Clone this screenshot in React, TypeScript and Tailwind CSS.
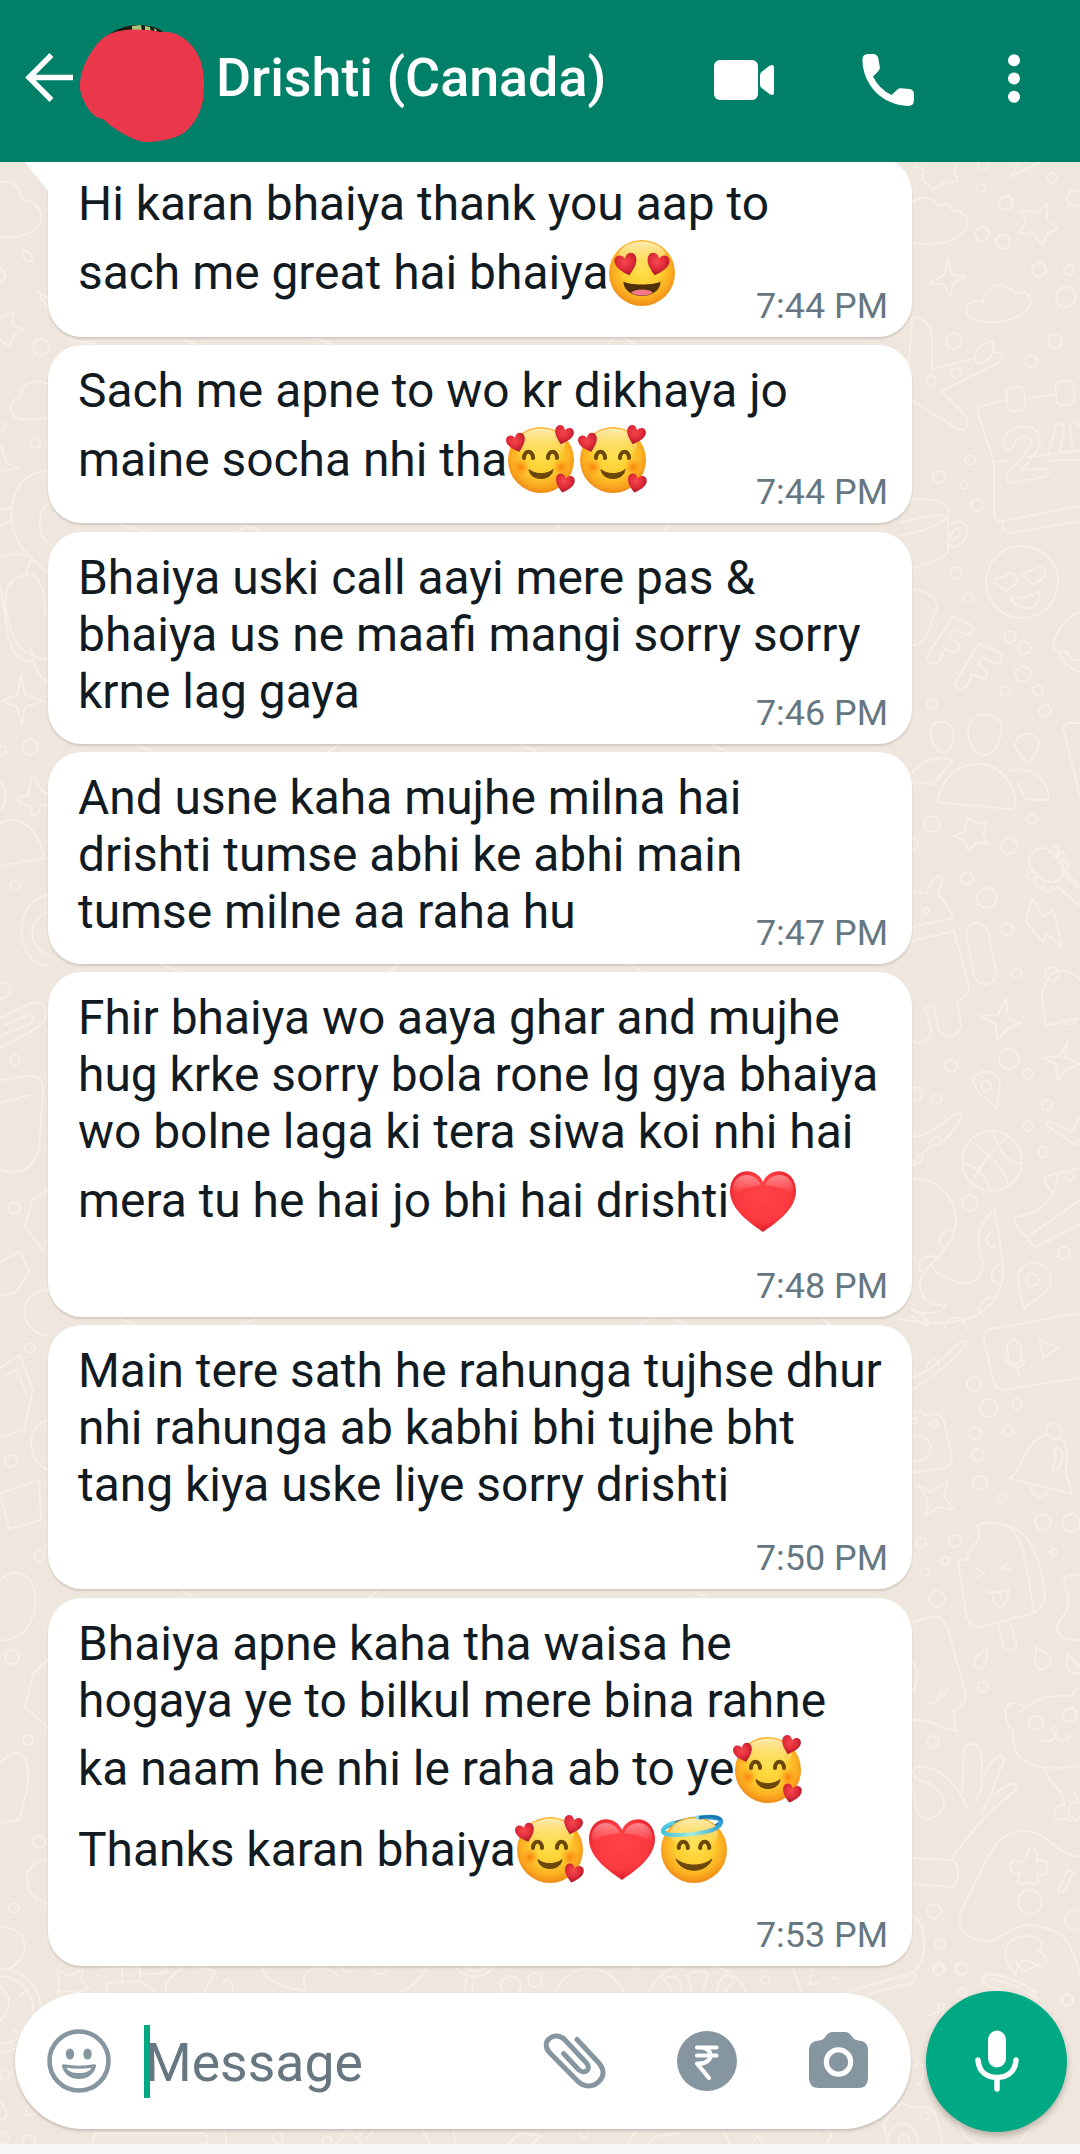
import React from 'react';

type EmojiName = 'love' | 'hearts' | 'heart' | 'halo';
type Line = { text: string; emojis?: EmojiName[] };
type Message = { lines: Line[]; time: string; timeRow?: boolean; tail?: boolean };

const messages: Message[] = [
  {
    tail: true,
    time: '7:44 PM',
    lines: [{ text: 'Hi karan bhaiya thank you aap to' }, { text: 'sach me great hai bhaiya', emojis: ['love'] }],
  },
  {
    time: '7:44 PM',
    lines: [{ text: 'Sach me apne to wo kr dikhaya jo' }, { text: 'maine socha nhi tha', emojis: ['hearts', 'hearts'] }],
  },
  {
    time: '7:46 PM',
    lines: [{ text: 'Bhaiya uski call aayi mere pas &' }, { text: 'bhaiya us ne maafi mangi sorry sorry' }, { text: 'krne lag gaya' }],
  },
  {
    time: '7:47 PM',
    lines: [{ text: 'And usne kaha mujhe milna hai' }, { text: 'drishti tumse abhi ke abhi main' }, { text: 'tumse milne aa raha hu' }],
  },
  {
    time: '7:48 PM',
    timeRow: true,
    lines: [
      { text: 'Fhir bhaiya wo aaya ghar and mujhe' },
      { text: 'hug krke sorry bola rone lg gya bhaiya' },
      { text: 'wo bolne laga ki tera siwa koi nhi hai' },
      { text: 'mera tu he hai jo bhi hai drishti', emojis: ['heart'] },
    ],
  },
  {
    time: '7:50 PM',
    timeRow: true,
    lines: [
      { text: 'Main tere sath he rahunga tujhse dhur' },
      { text: 'nhi rahunga ab kabhi bhi tujhe bht' },
      { text: 'tang kiya uske liye sorry drishti' },
    ],
  },
  {
    time: '7:53 PM',
    timeRow: true,
    lines: [
      { text: 'Bhaiya apne kaha tha waisa he' },
      { text: 'hogaya ye to bilkul mere bina rahne' },
      { text: 'ka naam he nhi le raha ab to ye', emojis: ['hearts'] },
      { text: 'Thanks karan bhaiya', emojis: ['hearts', 'heart', 'halo'] },
    ],
  },
];

const HEART = 'M0 10 C-5 6 -10.5 1.5 -10.5 -4 C-10.5 -10.5 -2.5 -11.5 0 -5.5 C2.5 -11.5 10.5 -10.5 10.5 -4 C10.5 1.5 5 6 0 10 Z';

function SharedGradients() {
  return (
    <svg className="absolute h-0 w-0" aria-hidden="true">
      <defs>
        <radialGradient id="face" cx="0.5" cy="0.44" r="0.58">
          <stop offset="0" stopColor="#fde04c" />
          <stop offset="0.5" stopColor="#fdce30" />
          <stop offset="0.78" stopColor="#fbab20" />
          <stop offset="1" stopColor="#ea8516" />
        </radialGradient>
        <linearGradient id="shine" x1="0" y1="0" x2="0" y2="1">
          <stop offset="0" stopColor="#fff3c4" stopOpacity="0.9" />
          <stop offset="1" stopColor="#fbe36a" stopOpacity="0.1" />
        </linearGradient>
        <radialGradient id="blush">
          <stop offset="0" stopColor="#fb7d0c" stopOpacity="0.95" />
          <stop offset="1" stopColor="#fb9a1c" stopOpacity="0" />
        </radialGradient>
        <radialGradient id="small-heart" cx="0.45" cy="0.35" r="0.65">
          <stop offset="0" stopColor="#f5484c" />
          <stop offset="0.55" stopColor="#e02b3a" />
          <stop offset="1" stopColor="#a51526" />
        </radialGradient>
        <radialGradient id="big-heart" cx="0.5" cy="0.42" r="0.62">
          <stop offset="0" stopColor="#ff4448" />
          <stop offset="0.65" stopColor="#fb3a40" />
          <stop offset="0.85" stopColor="#e8242f" />
          <stop offset="1" stopColor="#bd1c2a" />
        </radialGradient>
        <linearGradient id="heart-shine" x1="0" y1="0" x2="0" y2="1">
          <stop offset="0" stopColor="#ffffff" stopOpacity="0.4" />
          <stop offset="1" stopColor="#ffffff" stopOpacity="0" />
        </linearGradient>
        <linearGradient id="halo-front" x1="0" y1="0" x2="1" y2="0">
          <stop offset="0" stopColor="#3fc4dc" />
          <stop offset="0.5" stopColor="#a5eadb" />
          <stop offset="1" stopColor="#2a9fd4" />
        </linearGradient>
      </defs>
    </svg>
  );
}

function Face() {
  return (
    <>
      <circle cx="36" cy="36" r="33" fill="url(#face)" />
      <ellipse cx="36" cy="20" rx="24" ry="15.5" fill="url(#shine)" />
    </>
  );
}

function SmilingEyes({ left, right }: { left: number; right: number }) {
  return (
    <g fill="none" stroke="#6b4709" strokeWidth="4" strokeLinecap="round">
      <path d={`M${left - 4.6} 34 C${left - 4} 25.5 ${left + 4} 25.5 ${left + 4.6} 34`} />
      <path d={`M${right - 4.6} 34 C${right - 4} 25.5 ${right + 4} 25.5 ${right + 4.6} 34`} />
    </g>
  );
}

function Emoji({ name }: { name: EmojiName }) {
  return (
    <svg viewBox="0 0 72 72" className="block h-[72px] w-[72px] shrink-0 overflow-visible">
      {name === 'love' && (
        <>
          <Face />
          <path d="M17.5 44.5 C23 48.5 49 48.5 54.5 44.5 C55 52 47 59 36 59 C25 59 17 52 17.5 44.5 Z" fill="#50300a" />
          <path d="M25 55.5 C29 51.5 43 51.5 47 55.5 C43 59.6 29 59.6 25 55.5 Z" fill="#f4788a" />
          <path d={HEART} transform="translate(20.5 27.5) rotate(-14) scale(1.05 1.12)" fill="url(#small-heart)" />
          <path d={HEART} transform="translate(51.5 27.5) rotate(14) scale(1.05 1.12)" fill="url(#small-heart)" />
        </>
      )}
      {name === 'hearts' && (
        <>
          <Face />
          <circle cx="16" cy="43" r="9" fill="url(#blush)" />
          <circle cx="56" cy="43" r="9" fill="url(#blush)" />
          <SmilingEyes left={23.5} right={47.5} />
          <path d="M24 45.5 C25 57.5 47 57.5 48 45.5 C42 51 30 51 24 45.5 Z" fill="#6b4709" stroke="#6b4709" strokeWidth="1" strokeLinejoin="round" />
          <path d={HEART} transform="translate(11.5 18.8) rotate(-17) scale(0.9 0.94)" fill="url(#small-heart)" />
          <path d={HEART} transform="translate(58.5 11.2) rotate(17) scale(0.9 0.94)" fill="url(#small-heart)" />
          <path d={HEART} transform="translate(59.5 59.5) rotate(14) scale(0.9 0.94)" fill="url(#small-heart)" />
        </>
      )}
      {name === 'heart' && (
        <>
          <path
            d="M36 66 C24 57.5 3 44 3 25 C3 2 29 -1 36 16 C43 -1 69 2 69 25 C69 44 48 57.5 36 66 Z"
            fill="url(#big-heart)"
          />
          <path d="M6 21 C8 6 28 5 34 19 C26 20 14 22 6 28 Z" fill="url(#heart-shine)" />
          <path d="M66 21 C64 6 44 5 38 19 C46 20 58 22 66 28 Z" fill="url(#heart-shine)" />
        </>
      )}
      {name === 'halo' && (
        <>
          <ellipse cx="34" cy="12" rx="29.5" ry="7" transform="rotate(-10 34 12)" fill="none" stroke="#1676b8" strokeWidth="4" />
          <Face />
          <path d="M39 3.6 C52 2 62.5 2.5 63 7.5 C63 15 50 18 35 20 C20 21.5 6.500 22 5 17.500 C5 14 9 11 15 8.8" fill="none" stroke="url(#halo-front)" strokeWidth="4" strokeLinecap="round" />
          <path d="M41 3.8 C51 2 60 2.300 63 6" fill="none" stroke="#1676b8" strokeWidth="3.5" />
          <SmilingEyes left={25.3} right={46.7} />
          <path d="M18 45 C24 60 48 60 54 45 C45 53 27 53 18 45 Z" fill="#6b4709" stroke="#6b4709" strokeWidth="1" strokeLinejoin="round" />
        </>
      )}
    </svg>
  );
}

function Dots({ points }: { points: number[][] }) {
  return (
    <>
      {points.map(([x, y, r]) => (
        <circle key={`${x}-${y}`} cx={x} cy={y} r={r} />
      ))}
    </>
  );
}

function Wallpaper() {
  return (
    <svg
      viewBox="0 0 1080 1982"
      className="absolute inset-0 h-full w-full"
      fill="none"
      stroke="#f6eee8"
      strokeWidth="2"
      strokeLinecap="round"
      strokeLinejoin="round"
      aria-hidden="true"
    >
      {/* Upper right: sky, calendar, faces */}
      <g transform="translate(0 -2)">
        <path d="M914 6 L924 10 L922 19 L932 29 L944 23 L958 21 L954 11 L958 5 M1010 17 L1020 1 M1010 17 L1039 3" />
        <path d="M912 42 C922 35 934 38 938 46 C946 42 952 45 952 51 C962 50 969 57 967 66 C962 82 935 86 912 83" />
        <path d="M1021 51 L1037 52 L1047 44 L1047 60 L1058 68 L1048 73 L1042 85 L1034 74 L1019 73 L1026 63 Z" />
        <path d="M948 98 C950 116 950 116 966 116 C968 118 956 120 953 123 C953 130 950 138 948 133 C946 125 946 123 931 124 C928 121 945 117 945 113 Z" />
        <path d="M983 141 C986 122 1008 122 1016 134 C1026 128 1033 138 1030 145 C1024 162 981 168 968 156 C963 144 972 138 983 142 Z" />
        <path d="M909 205 L912 159 C920 153 932 166 932 178 L932 209 L975 198 C978 180 987 185 993 181 L993 192 C1005 192 1005 199 996 204 L941 231 L964 254 C972 265 965 274 956 268 L913 241 M975 198 C973 207 988 204 993 192" />
        <path d="M1007 240 L982 246 Q976 248 978 254 L994 302 L994 354 Q995 361 1002 361 Q1001 372 1012 373 L1080 361 M1003 361 L1080 346 M994 302 L1007 301 M1027 297 L1080 291 M1028 238 L1055 235" />
        <rect x="1007" y="227" width="18" height="24" rx="5" transform="rotate(-5 1016 239)" />
        <rect x="1056" y="221" width="18" height="24" rx="5" transform="rotate(-5 1065 233)" />
        <path d="M1005 286 C998 270 1025 262 1035 270 C1047 281 1037 294 1021 310 L1043 309 C1050 309 1050 316 1044 317 L1010 323 C1005 323 1006 313 1010 310 C1022 298 1035 284 1030 279 C1025 274 1015 278 1013 287 C1010 292 1006 291 1005 286 Z M1056 265 L1048 296 C1047 301 1052 302 1055 300 L1078 300 M1056 265 C1061 261 1065 266 1064 270 L1059 292 L1073 291 L1070 267 C1071 260 1079 260 1080 268" />
        <path d="M900 344 C914 337 944 337 949 351 C950 363 920 373 900 375 M900 363 C920 357 940 352 948 358 L948 392 C940 403 920 406 900 410 M949 366 C964 355 975 369 961 384 C955 390 950 386 947 382 M951 374 C957 364 965 370 957 377 C953 381 950 381 951 374" />
        <ellipse cx="1022" cy="422" rx="36" ry="36" />
        <path d="M994 423 C995 415 1005 420 1008 413 C1015 410 1020 419 1014 425 L1007 431 Z M1023 416 C1025 408 1033 413 1035 408 C1043 403 1048 413 1043 418 L1034 425 Z M1010 438 Q1026 439 1039 432 Q1041 444 1030 448 C1020 449 1014 445 1010 438 Z" />
        <path d="M912 430 C927 429 943 443 935 452 C930 460 932 460 929 471 C926 481 918 486 912 485 M952 457 L970 464 C976 468 972 476 966 474 L954 469 L949 478 L956 482 C962 486 959 493 953 492 L945 489 L939 501 C934 508 925 501 928 495 Z M979 483 L1000 493 C1004 498 1000 505 995 503 L982 497 L978 505 L985 509 C990 514 985 520 980 517 L972 514 L967 526 C962 532 953 528 955 523 Z" />
        <path d="M1080 452 C1061 458 1054 480 1053 487 C1055 494 1066 491 1066 491 C1069 498 1074 502 1080 499 M1060 491 C1061 501 1070 508 1080 512" />
        <path d="M931 575 C930 559 939 562 946 562 C956 566 955 579 949 590 C942 597 932 589 931 575 Z M968 571 C970 552 991 549 1001 563 C1004 580 993 595 985 595 C976 595 967 582 968 571 Z M1015 587 C1015 571 1034 570 1039 582 C1037 594 1031 603 1026 602 Z" />
        <path d="M912 613 C925 596 944 596 953 601 L933 624 L912 622 M938 640 C946 594 1010 588 1016 645 Q1014 650 1008 649 L944 643 Q938 642 938 640 Z M1010 611 C1025 604 1052 619 1048 640 Q1042 640 1025 639 L1018 622 M1080 636 L1064 571 C1060 564 1070 562 1075 563 L1080 563" />
        <Dots points={[[981, 28, 4], [983, 5, 5], [1006, 43, 7], [1052, 18, 5], [1075, 38, 8], [982, 74, 7], [1003, 82, 7], [1039, 110, 7], [1069, 110, 5], [1066, 137, 10], [954, 181, 8], [1055, 181, 7], [1031, 201, 6], [931, 221, 5], [956, 213, 5], [939, 317, 6], [970, 300, 5], [964, 325, 4], [977, 345, 6], [956, 413, 6], [968, 438, 5], [1010, 477, 6], [1025, 488, 6], [1023, 514, 8], [1005, 531, 5], [1038, 530, 5], [1045, 551, 6], [932, 544, 5]]} />
      </g>

      {/* Middle right: robot, ball, snake, sneaker */}
      <g transform="translate(900 618)">
        <path d="M67 38 L77 43 L87 42 L83 54 L87 64 L77 62 L68 71 L65 61 L54 56 L65 51 Z" />
        <path d="M12 112 L27 113 C31 98 40 93 43 98 L38 115 Q49 125 53 138 L12 147 M12 161 L54 151 L69 208 Q68 218 57 221 L61 245 C60 259 40 259 38 247 L34 226 L25 227 L31 250 C30 262 18 265 12 261 M66 154 C66 141 83 139 88 151 L96 192 C95 208 78 208 74 196 Z" />
        <path d="M106 218 L108 239 L121 243 L107 249 L97 260 L96 244 L80 236 L98 235 Z M168 261 L165 277 L180 284 L165 290 L158 301 L156 284 L142 278 L160 276 Z M132 118 L144 137 L153 130 L162 167 L147 154 L143 162 L126 142 Z" />
        <path d="M180 105 L164 92 C158 105 146 105 137 95 C125 85 128 77 137 69 C146 63 164 80 164 94 M166 97 L180 108 M157 106 L180 126 M149 73 C157 57 163 69 154 78 C163 66 170 76 159 83 C170 77 171 91 162 91 M132 91 C123 96 127 104 136 96 C133 110 142 111 145 103 C142 114 151 115 153 106" />
        <path d="M180 200 C172 190 158 188 151 195 C135 214 145 224 145 246 L178 238 M164 240 C167 248 176 245 176 238" />
        <path d="M97 328 C90 323 74 311 73 300 C77 287 99 289 100 304 Z M13 357 C35 355 50 333 61 333 C64 340 43 367 31 366 C20 375 12 382 12 386 M29 367 C30 356 40 352 41 364 M17 376 C22 371 28 381 12 386" />
        <ellipse cx="92" cy="381" rx="30" ry="30" />
        <path d="M62 383 Q83 388 91 411 M71 405 C82 383 95 365 109 357 M73 363 C90 374 103 387 108 404 M93 352 C98 373 110 382 121 384" />
        <path d="M12 399 C49 396 70 440 45 469 C30 487 19 493 20 506 C22 525 38 526 46 525 C42 536 21 534 12 530 M31 485 C40 501 81 517 83 483 C78 465 72 448 95 429 C97 456 103 463 103 498 C94 537 60 551 0 539 M12 536 C25 549 43 550 12 528 M54 451 C43 446 33 465 45 468 M38 479 C25 469 13 487 21 491 M92 452 C82 457 87 470 96 466 M99 485 C88 490 89 502 101 505 M94 518 C88 515 76 525 80 533 M67 549 C64 532 44 537 45 547" />
        <path d="M180 388 L146 396 Q142 399 148 407 L153 413 Q145 431 120 436 Q112 437 115 443 C119 449 121 455 127 457 Q133 469 138 466 L180 445 M127 457 L180 420 M158 395 L153 413 M145 344 L175 365 L180 359 M145 344 C148 340 152 341 155 344 L172 352 L180 337" />
        <path d="M124 529 C121 517 115 498 119 492 C129 477 148 480 151 500 C152 514 129 521 124 529 Z M180 533 L91 549 Q82 552 84 560 L94 603 Q98 612 108 609 L180 598 M139 559 L143 578 L158 568 Z M107 569 C106 557 119 557 121 568 L121 579 C119 587 108 585 108 575 Z M105 579 C110 590 121 591 125 580 M117 587 L119 596 M12 597 C43 588 53 560 67 561 C65 570 38 594 12 610 M27 588 C29 577 37 576 39 586" />
        <Dots points={[[32, 44, 8], [13, 64, 5], [109, 66, 8], [132, 39, 5], [67, 98, 6], [87, 118, 10], [107, 149, 6], [117, 193, 5], [26, 131, 3], [152, 194, 7], [109, 279, 10], [51, 286, 6], [128, 294, 5], [37, 319, 5], [15, 314, 7], [147, 325, 5], [128, 346, 5], [143, 372, 5], [70, 423, 8], [164, 473, 6], [133, 500, 6], [86, 306, 5], [74, 604, 7], [170, 397, 4]]} />
      </g>

      {/* Lower right: ice pop, cat, hand, controller */}
      <g transform="translate(900 1238)">
        <path d="M12 13 L21 11 L24 15 L39 14 L44 20 L52 58 Q51 66 44 68 L12 73 M12 36 C36 31 37 65 12 61 M18 86 L31 92 L48 81 L44 96 L54 110 L38 107 L26 116 L28 99 Z" />
        <path d="M77 126 C83 120 112 123 123 134 C136 145 144 180 145 193 C145 208 134 213 134 213 L80 227 Q69 228 66 213 L58 161 L68 159 C64 150 74 154 71 146 C79 143 82 133 77 126 M103 124 C125 130 128 177 134 213 M98 225 L103 246 C110 256 121 246 115 240 L111 223 M75 168 L85 173 L77 177 M109 162 L102 168 L111 170 M87 192 C96 194 106 190 110 189 M92 193 C95 212 108 211 108 190 M100 192 L101 199" />
        <path d="M110 78 C127 66 122 41 148 34 M156 38 C171 39 166 56 166 73 L172 94 L108 78 M131 87 C132 101 146 98 147 92 M154 49 C162 45 166 57 158 69 C151 73 152 65 155 62 C158 56 153 54 154 49 M180 176 C170 172 162 177 164 186 C176 210 160 215 157 227 C157 240 171 239 180 240" />
        <path d="M86 249 C76 256 71 263 75 267 C85 272 89 260 86 249 Z M136 247 C136 259 133 261 138 269 C151 271 154 258 145 252 Z M168 255 C172 258 178 264 180 269 M168 255 C165 269 170 276 180 273" />
        <path d="M12 222 L36 216 Q43 217 48 229 L66 296 Q65 307 53 311 L56 330 C48 333 31 317 12 320 M27 301 L35 304 L42 290 M40 301 L49 287 M12 262 C19 268 18 286 12 292" />
        <path d="M171 296 C150 295 137 298 126 308 C113 299 103 302 106 319 Q107 327 113 330 C110 365 135 372 180 366 M126 308 L120 311 M143 340 C149 344 156 339 155 334 C158 345 170 341 169 334 M150 329 C154 324 160 329 155 334 Z M145 370 C149 385 162 387 165 405 M165 405 C151 403 151 425 166 419 C177 424 180 416 180 416 M174 391 L178 402 C168 399 164 416 174 418 M172 297 C174 287 180 288 180 288" />
        <path d="M67 408 C54 377 34 365 18 367 C11 369 12 375 17 379 C27 385 26 379 32 386 C42 393 48 401 42 409 C35 423 18 422 16 406 C14 395 10 386 12 382 M62 390 C66 365 58 343 73 344 C88 347 79 374 82 385 L76 403 M84 377 C92 356 104 351 104 362 C97 374 92 397 81 414 M93 395 C105 385 119 379 116 389 C105 401 86 409 52 459 M12 458 L51 460 C62 462 59 486 51 487 L12 484" />
        <path d="M180 457 C152 454 149 428 118 431 C94 435 87 460 63 508 C53 527 66 541 88 541 C105 540 113 519 142 527 C163 533 170 536 180 575 M128 451 C130 443 142 450 136 461 C149 457 151 470 143 475 C134 475 137 477 139 481 C130 491 132 476 126 484 C115 486 117 480 120 473 C105 474 109 461 115 460 C124 465 127 459 128 451 M168 470 L158 491 L163 493 L174 472 Z" />
        <path d="M116 575 C96 551 107 536 130 536 C143 538 145 546 137 552 C150 551 148 570 138 566 C125 557 117 559 116 575 M82 582 C84 567 113 579 137 592 M82 582 C91 589 106 588 119 602 M91 579 C106 582 125 588 137 600 M12 515 C29 522 28 565 12 572 M0 579 C17 573 19 575 12 584 L0 587" />
        <Dots points={[[14, 21, 3], [34, 24, 4], [89, 8, 9], [117, 4, 5], [75, 33, 6], [108, 31, 5], [78, 55, 6], [80, 83, 7], [102, 98, 4], [154, 31, 8], [143, 122, 8], [171, 123, 9], [21, 143, 5], [55, 141, 6], [45, 161, 4], [25, 172, 4], [37, 199, 8], [83, 287, 5], [136, 323, 7], [170, 315, 7], [33, 342, 6], [130, 502, 12], [34, 511, 7], [40, 544, 5], [39, 570, 5], [62, 569, 6], [175, 520, 10], [167, 600, 5], [154, 152, 3]]} />
      </g>

      {/* Left margin */}
      <g transform="translate(0 -2)">
        <path d="M0 22 C22 20 16 34 25 40 C43 43 47 65 31 72 C20 77 9 78 0 77 M23 90 C31 92 34 98 32 101 C24 102 22 98 23 90 M0 108 C7 114 7 119 0 121 M0 158 L14 152 L12 164 L24 170 L14 175 L10 187 L0 180 M37 132 L48 138 M40 137 L48 148 M48 224 C32 216 20 227 20 238 C7 239 8 256 18 258 C30 262 40 259 48 258 M0 284 L6 302 L18 309 L0 311" />
        <path d="M48 310 C18 313 9 339 12 361 C14 386 31 398 48 413 M48 344 C37 350 37 375 48 382 M12 347 L0 350 M12 360 L0 366 M0 396 C12 394 24 393 32 397 L25 415 C2 420 3 442 9 464 C16 486 20 494 48 500 M25 415 C35 410 45 422 45 455 M31 488 L33 498 C35 510 41 519 48 521 M0 425 L8 476 C15 498 21 502 33 501 M21 516 L25 535 L43 541 L25 547 L22 564 L17 547 L2 541 L17 535 Z" />
        <path d="M32 617 C37 612 38 634 48 634 M32 617 L28 636 C10 635 20 646 30 645 C31 663 41 653 40 646 L48 645 M0 620 C10 635 3 650 0 650 M0 664 C14 652 39 666 44 698 L0 706 M48 735 C20 739 15 780 29 795 C35 804 43 806 48 806 M48 752 C29 758 25 785 48 795 M0 858 L29 844 C50 838 50 860 37 868 L0 888 M5 865 L30 854 C36 855 34 861 28 865 L2 875" />
        <path d="M0 920 C24 918 43 907 43 930 L39 990 C29 1020 9 1011 0 1010 M0 943 L30 935 M48 1030 L32 1040 L25 1067 L43 1090 M0 1102 L20 1091 L29 1112 L16 1132 L0 1136 M48 1130 C20 1129 14 1170 48 1176" />
        <path d="M0 1208 L20 1195 L33 1230 L24 1270 L0 1277 M5 1215 L17 1210 L26 1233 M48 1260 C25 1267 26 1299 48 1310 M0 1333 L39 1320 L41 1360 L9 1369 Z M0 1420 C20 1402 39 1420 35 1447 C31 1473 16 1479 0 1481 M48 1499 L33 1514 L25 1547 L48 1568 M0 1603 C23 1580 32 1600 27 1631 L19 1660 L0 1663 M48 1700 C22 1700 18 1735 48 1744 M0 1767 C19 1767 31 1779 21 1799 C12 1809 4 1811 0 1810" />
        <Dots points={[[41, 187, 8], [35, 283, 5], [0, 266, 5], [30, 587, 8], [1, 591, 5], [15, 725, 5], [2, 830, 8], [15, 900, 5], [14, 1048, 6], [30, 1188, 5], [11, 1301, 6], [39, 1396, 5], [12, 1497, 7], [28, 1580, 5], [39, 1682, 6], [14, 1748, 5]]} />
      </g>

      {/* Behind the composer */}
      <g transform="translate(0 1798)">
        <circle cx="-1" cy="50" r="42" />
        <circle cx="-1" cy="50" r="34" />
        <path d="M0 25 L9 38 L8 50 L0 61 M14 69 L19 74 M20 36 L27 30 M57 9 L69 16 L83 9 L80 20 L89 28 L78 33 L67 31 L57 32 L60 24 Z M101 0 L103 9 L122 8 L122 22 L107 23 L107 32 M122 8 L140 7 L140 21 L122 22 M140 14 L166 13 L167 0 M140 21 L155 31 M166 31 C164 18 180 9 194 0 M195 7 L215 11 L201 39 M223 25 C224 16 233 18 233 31 M262 0 C258 18 280 28 305 31 M305 29 C298 4 325 3 338 15 M430 0 C425 15 414 26 402 31 M453 0 C460 24 490 20 498 0 M461 0 C465 14 485 15 491 0 M466 18 L465 31 M474 18 L472 31" />
        <path d="M556 31 C569 -1 611 3 623 31 M650 31 C660 -3 728 -7 746 31 M672 31 L664 19 C674 12 682 22 682 31 M692 31 L687 15 Q697 8 708 14 L703 31 M717 31 C720 15 728 10 734 21 L725 31 M790 0 L801 31 M811 14 L809 25 L818 23 M832 17 L837 19 M841 7 L849 3 M851 31 L914 12 Q919 16 912 22 L869 34 M984 14 C998 11 1035 26 1037 38 M984 14 C979 26 996 29 1010 36 M1016 0 C1021 14 1025 12 1032 8 L1043 1 M929 55 Q942 52 938 45 Q945 38 943 54 C958 57 967 69 950 81 M915 106 C922 98 929 111 918 125" />
        <path d="M0 141 C9 151 8 160 0 160 M28 145 L25 156 L36 154 M92 182 L96 173 L204 173 C211 178 209 185 199 184 M225 169 L226 184 M336 184 L349 168 L361 184 M364 170 L357 179 M373 171 L366 179 M422 169 L430 184 M455 184 L453 170 M508 184 L520 173 L541 176 L532 184 M628 184 L637 169 M647 184 L656 176 L682 173 M723 169 L730 184 M752 184 L758 175 L763 184 M817 173 L824 166 L832 174 L828 182 M888 184 L884 165 C890 150 898 149 901 142 C905 144 912 150 918 147 C932 146 935 150 938 162 L943 184 M888 178 C893 158 917 158 918 184 M898 181 C901 171 908 171 910 184 M958 161 C964 178 970 182 980 184 M1018 184 C1027 174 1032 160 1044 158" />
        <Dots points={[[347, 6, 6], [380, 7, 7], [511, 26, 10], [535, 20, 7], [5, 115, 5], [29, 181, 6], [3, 178, 6], [278, 178, 5], [327, 181, 5], [584, 173, 5], [765, 20, 4], [939, 9, 6], [962, 8, 6], [962, 32, 4], [1067, 40, 6], [925, 156, 4], [636, 4, 5]]} />
      </g>

      {/* Details showing through the gaps between bubbles */}
      <path d="M70 178 L95 182 M180 176 L196 183 M310 177 C322 174 328 183 335 184 M610 179 C620 171 630 179 635 183 M121 363 L145 369 M237 370 C246 362 256 365 261 371 M560 363 L552 370 M668 363 L664 371 M134 582 L151 589 M340 582 L328 590 M520 583 L536 589 M710 582 L725 589 M160 802 L182 810 M400 801 L389 810 M630 802 L644 810 M120 1156 L136 1163 M255 1157 L240 1163 M640 1162 C650 1153 672 1152 687 1163 M820 1155 L830 1163 M180 1428 L192 1434 M380 1427 L370 1435 M690 1428 L705 1434" />
    </svg>
  );
}

function Header() {
  return (
    <header className="relative z-10 flex h-[162px] shrink-0 items-start bg-[#008069] text-white">
      <svg viewBox="0 0 52 52" className="ml-[23px] mt-[51px] h-[52px] w-[52px] shrink-0" fill="none" stroke="#fff" strokeWidth="5.4">
        <path d="M50 26.500 H6 M28.500 4 L6 26.500 L28.500 49" />
      </svg>
      <svg viewBox="0 0 128 122" className="ml-[3px] mt-[23px] h-[122px] w-[128px] shrink-0">
        <path d="M14 33 C24 10 45 1 63 2 C74 3 82 5 86 10 L60 40 Z" fill="#171c14" />
        <path d="M54 3 L63 2 L64 9 L54 10 Z M67 3 L72 4 L73 9 L67 9 Z M76 5 L79 7 L77 9 Z" fill="#a5c77a" />
        <path
          d="M42 8 C52 6 68 6 82 9 C101 7 117 21 123 39 C126 49 127 65 125 77 C122 94 111 109 100 113 C90 117 78 119 67 119 C56 118 42 109 33 103 L25 96 C16 96 5 82 2 66 C1 48 10 33 19 21 C25 14 33 9 42 8 Z"
          fill="#eb374b"
        />
      </svg>
      <h1 className="ml-[10px] mt-[46px] w-[441px] shrink-0 whitespace-nowrap text-[53.800px] font-medium leading-[64px]">Drishti (Canada)</h1>
      <svg viewBox="0 0 60 40" className="ml-[57px] mt-[60px] h-[40px] w-[60px] shrink-0" fill="#fff">
        <rect x="0" y="0" width="44" height="40" rx="6" />
        <path d="M46 15 Q46 13 48 11.500 L55.500 5.800 Q60 3.500 60 8 V32 Q60 36.500 55.500 34 L48 28.200 Q46 27 46 25 Z" />
      </svg>
      <svg viewBox="0 0 52 52" className="ml-[88px] mt-[54px] h-[52px] w-[52px] shrink-0" fill="#fff">
        <path d="M0.400 6 Q0.400 0 6 0 H11 Q15.500 0 16.300 4.500 L17.800 13 Q18.200 15.500 16.500 17 L11 22.500 Q17 35 29.500 41 L35.500 35.500 Q37 34 39 34.200 L47.500 34.900 Q51.900 35.500 51.900 40 V46 Q51.900 52 46 51.900 C20 51 1 31 0.400 6 Z" />
      </svg>
      <svg viewBox="0 0 12 49" className="ml-[94px] mt-[54px] h-[49px] w-[12px] shrink-0" fill="#fff">
        <circle cx="6" cy="6.300" r="6" />
        <circle cx="6" cy="24.500" r="6" />
        <circle cx="6" cy="42.700" r="6" />
      </svg>
    </header>
  );
}

function Bubble({ message }: { message: Message }) {
  return (
    <article className="relative w-[864px] rounded-[34px] bg-white pb-[23px] pl-[30px] pt-[18px] text-[#111b21] shadow-[0_2px_2px_rgba(60,50,40,0.16)]">
      {message.tail && (
        <svg viewBox="0 0 50 60" className="absolute -left-[26px] top-0 h-[60px] w-[50px]" fill="#fff">
          <path d="M0 0 H50 V60 L26 50 V33 L5 7 Z" />
        </svg>
      )}
      {message.lines.map((line) =>
        line.emojis ? (
          <div key={line.text} className="relative flex h-[80.500px] items-center whitespace-pre text-[47.920px] leading-[57px]">
            <span className="-mr-[2px]">{line.text}</span>
            {line.emojis.map((name, index) => (
              <Emoji key={index} name={name} />
            ))}
          </div>
        ) : (
          <p key={line.text} className="relative h-[57px] whitespace-pre text-[47.920px] leading-[57px]">
            {line.text}
          </p>
        ),
      )}
      {message.timeRow && <div className="h-[52px]" />}
      <time className="absolute bottom-[9px] right-[24px] text-[35.900px] leading-[44px] text-[#667781]">{message.time}</time>
    </article>
  );
}

function Composer() {
  return (
    <footer className="relative flex h-[136px] items-center pl-[15px]">
      <div className="flex h-[136px] w-[896px] items-center rounded-full bg-white shadow-[0_2px_3px_rgba(60,50,40,0.22)]">
        <svg viewBox="0 0 64 64" className="ml-[32px] h-[64px] w-[64px] shrink-0">
          <circle cx="32" cy="32" r="29.500" fill="none" stroke="#8696a0" strokeWidth="4.600" />
          <ellipse cx="23" cy="25" rx="4.200" ry="5.600" fill="#8696a0" />
          <ellipse cx="40.500" cy="25" rx="4.200" ry="5.600" fill="#8696a0" />
          <path d="M15 37 Q14.500 35 17 35.300 Q32 38 47 35.300 Q49.500 35 49 37 C47.500 45.500 40 50 32 50 C24 50 16.500 45.500 15 37 Z" fill="#8696a0" />
          <path d="M19.500 38.700 Q32 41 44.500 38.700 C43 42.500 38 44 32 44 C26 44 21 42.500 19.500 38.700 Z" fill="#fff" />
        </svg>
        <div className="ml-[33px] h-[73px] w-[6px] shrink-0 bg-[#00a884]" />
        <span className="-ml-[5px] w-[398px] shrink-0 pt-[3px] text-[53.500px] leading-[64px] text-[#667781]">Message</span>
        <svg viewBox="43 73 63 57" className="h-[57px] w-[63px] shrink-0" fill="none" stroke="#8696a0" strokeWidth="5" strokeLinecap="round" strokeLinejoin="round">
          <path d="M77 79.500 L98 102 C104.500 109 104.500 116 99 121.500 C93 127.500 84 127.500 77.500 121 L50 93 C45 88 45 82 49.500 78.500 C54 74.500 60.500 75.500 65 80 L86 102.500 C89.500 106 88.500 109 87 110.500 C85 112.500 81.500 112.500 78.500 109.500 L63.500 93.500" />
        </svg>
        <svg viewBox="0 0 60 60" className="ml-[71px] h-[60px] w-[60px] shrink-0">
          <circle cx="30" cy="30" r="30" fill="#8696a0" />
          <path d="M20 16.500 H39.500 M20 24.500 H39.500 M23 16.500 C37 16 37 32.500 23 32.500 H20 L32 47" fill="none" stroke="#fff" strokeWidth="4.200" strokeLinecap="round" strokeLinejoin="round" />
        </svg>
        <svg viewBox="0 0 59 56" className="mb-[3px] ml-[72px] h-[56px] w-[59px] shrink-0">
          <path d="M10 8.500 C18 8 16 0 24 0 H36 C43 0 42 8 49.500 8.500 Q59 9 59 18 V46 Q59 56 49 56 H10 Q0 56 0 46 V18 Q0 9 10 8.500 Z" fill="#8696a0" />
          <circle cx="29.500" cy="30" r="12.200" fill="none" stroke="#fff" strokeWidth="5" />
        </svg>
      </div>
      <div className="ml-[15px] flex h-[141px] w-[141px] items-center justify-center rounded-full bg-[#00a884] shadow-[0_4px_6px_rgba(60,50,40,0.3)]">
        <svg viewBox="0 0 46 62" className="h-[62px] w-[46px]" fill="none" stroke="#fff" strokeWidth="5.500" strokeLinecap="round">
          <rect x="14" y="0.500" width="18" height="37" rx="9" fill="#fff" stroke="none" />
          <path d="M4 30 C5 42 13 47.500 23 47.500 C33 47.500 41 42 42 30 M23 48 V59" />
        </svg>
      </div>
    </footer>
  );
}

export default function App() {
  return (
    <div className="flex h-[2154px] w-[1080px] flex-col overflow-hidden bg-[#f6f7f9] font-['Roboto',sans-serif]">
      <SharedGradients />
      <Header />
      <main className="relative h-[1982px] shrink-0 overflow-hidden bg-[#efe7de]">
        <Wallpaper />
        <div className="relative -mt-[4px] flex flex-col gap-[8.350px] pl-[48px]">
          {messages.map((message, index) => (
            <Bubble key={index} message={message} />
          ))}
        </div>
        <div className="relative mt-[27.500px]">
          <Composer />
        </div>
      </main>
    </div>
  );
}
